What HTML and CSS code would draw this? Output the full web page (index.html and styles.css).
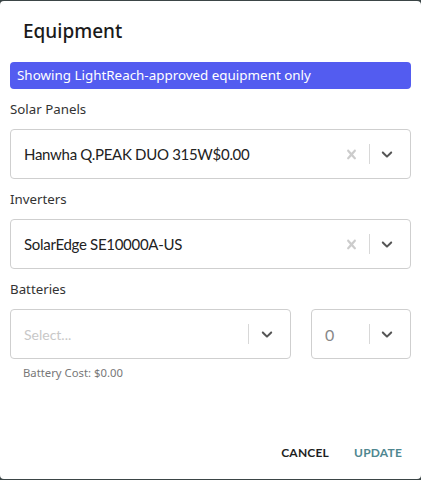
FILE: index.html
```html
<!DOCTYPE html>
<html>
<head>
<meta charset="utf-8">
<link rel="stylesheet" href="styles.css">
</head>
<body>
<div class="dialog">
  <h2 class="title">Equipment</h2>
  <div class="banner">Showing LightReach-approved equipment only</div>
  <div class="field">
    <div class="label">Solar Panels</div>
    <div class="select">
      <div class="value">Hanwha Q.PEAK DUO 315W$0.00</div>
      <div class="indicators">
        <svg class="clear" width="20" height="20" viewBox="0 0 20 20"><path d="M14.348 14.849c-0.469 0.469-1.229 0.469-1.697 0l-2.651-3.030-2.651 3.029c-0.469 0.469-1.229 0.469-1.697 0-0.469-0.469-0.469-1.229 0-1.697l2.758-3.15-2.759-3.152c-0.469-0.469-0.469-1.228 0-1.697s1.228-0.469 1.697 0l2.652 3.031 2.651-3.031c0.469-0.469 1.228-0.469 1.697 0s0.469 1.229 0 1.697l-2.758 3.152 2.758 3.15c0.469 0.469 0.469 1.229 0 1.698z"/></svg>
        <span class="sep"></span>
        <svg class="chev" width="20" height="20" viewBox="0 0 20 20"><path d="M4.516 7.548c0.436-0.446 1.043-0.481 1.576 0l3.908 3.747 3.908-3.747c0.533-0.481 1.141-0.446 1.574 0 0.436 0.445 0.408 1.197 0 1.615-0.406 0.418-4.695 4.502-4.695 4.502-0.217 0.223-0.502 0.335-0.787 0.335s-0.57-0.112-0.789-0.335c0 0-4.287-4.084-4.695-4.502s-0.436-1.170 0-1.615z"/></svg>
      </div>
    </div>
  </div>
  <div class="field">
    <div class="label">Inverters</div>
    <div class="select">
      <div class="value">SolarEdge SE10000A-US</div>
      <div class="indicators">
        <svg class="clear" width="20" height="20" viewBox="0 0 20 20"><path d="M14.348 14.849c-0.469 0.469-1.229 0.469-1.697 0l-2.651-3.030-2.651 3.029c-0.469 0.469-1.229 0.469-1.697 0-0.469-0.469-0.469-1.229 0-1.697l2.758-3.15-2.759-3.152c-0.469-0.469-0.469-1.228 0-1.697s1.228-0.469 1.697 0l2.652 3.031 2.651-3.031c0.469-0.469 1.228-0.469 1.697 0s0.469 1.229 0 1.697l-2.758 3.152 2.758 3.15c0.469 0.469 0.469 1.229 0 1.698z"/></svg>
        <span class="sep"></span>
        <svg class="chev" width="20" height="20" viewBox="0 0 20 20"><path d="M4.516 7.548c0.436-0.446 1.043-0.481 1.576 0l3.908 3.747 3.908-3.747c0.533-0.481 1.141-0.446 1.574 0 0.436 0.445 0.408 1.197 0 1.615-0.406 0.418-4.695 4.502-4.695 4.502-0.217 0.223-0.502 0.335-0.787 0.335s-0.57-0.112-0.789-0.335c0 0-4.287-4.084-4.695-4.502s-0.436-1.170 0-1.615z"/></svg>
      </div>
    </div>
  </div>
  <div class="field">
    <div class="label">Batteries</div>
    <div class="battery-row">
      <div class="select battery">
        <div class="value placeholder">Select...</div>
        <div class="indicators">
          <span class="sep"></span>
          <svg class="chev" width="20" height="20" viewBox="0 0 20 20"><path d="M4.516 7.548c0.436-0.446 1.043-0.481 1.576 0l3.908 3.747 3.908-3.747c0.533-0.481 1.141-0.446 1.574 0 0.436 0.445 0.408 1.197 0 1.615-0.406 0.418-4.695 4.502-4.695 4.502-0.217 0.223-0.502 0.335-0.787 0.335s-0.57-0.112-0.789-0.335c0 0-4.287-4.084-4.695-4.502s-0.436-1.170 0-1.615z"/></svg>
        </div>
      </div>
      <div class="select count">
        <div class="value muted">0</div>
        <div class="indicators">
          <span class="sep"></span>
          <svg class="chev" width="20" height="20" viewBox="0 0 20 20"><path d="M4.516 7.548c0.436-0.446 1.043-0.481 1.576 0l3.908 3.747 3.908-3.747c0.533-0.481 1.141-0.446 1.574 0 0.436 0.445 0.408 1.197 0 1.615-0.406 0.418-4.695 4.502-4.695 4.502-0.217 0.223-0.502 0.335-0.787 0.335s-0.57-0.112-0.789-0.335c0 0-4.287-4.084-4.695-4.502s-0.436-1.170 0-1.615z"/></svg>
        </div>
      </div>
    </div>
    <div class="cost">Battery Cost: $0.00</div>
  </div>
  <div class="actions">
    <button class="btn cancel">CANCEL</button>
    <button class="btn update">UPDATE</button>
  </div>
</div>
</body>
</html>
```
FILE: styles.css
```css
html, body {
  margin: 0;
  padding: 0;
  background: #3b4546;
  height: 480px;
  overflow: hidden;
}
body {
  padding-top: 1px;
  box-sizing: border-box;
  font-family: "Noto Sans", "Open Sans", sans-serif;
}
.dialog {
  background: #fff;
  border-radius: 4px;
  height: 478px;
  padding: 0 10px;
  box-sizing: border-box;
  display: flex;
  flex-direction: column;
}
.title {
  margin: 0;
  padding: 15px 0 0 13px;
  font-size: 19px;
  font-weight: 500;
  color: #1a1a1a;
  line-height: 30px;
  height: 46px;
}
.banner {
  background: #535cf0;
  color: #fff;
  border-radius: 4px;
  font-size: 13.4px;
  line-height: 27px;
  height: 27px;
  padding: 0 7px;
}
.field {
  display: flex;
  flex-direction: column;
}
.label {
  font-size: 13.3px;
  color: #333;
  line-height: 20px;
  margin-top: 10px;
  height: 20px;
}
.select {
  margin-top: 10px;
  height: 50px;
  border: 1px solid #cfcfcf;
  border-radius: 4px;
  box-sizing: border-box;
  display: flex;
  align-items: center;
  padding-left: 13px;
}
.value {
  flex: 1;
  font-family: Lato, "Liberation Sans", sans-serif;
  font-size: 15px;
  letter-spacing: -0.3px;
  color: #222;
  white-space: nowrap;
}
.placeholder {
  color: #c8c8c8;
  font-size: 14px;
  letter-spacing: 0;
}
.muted {
  color: #888;
}
.indicators {
  display: flex;
  align-items: center;
  padding-right: 14px;
}
.clear {
  fill: #cccccc;
  width: 19px;
  height: 19px;
  margin-right: 8px;
}
.sep {
  width: 1px;
  height: 20px;
  background: #d8d8d8;
  margin-right: 8px;
}
.chev {
  fill: #555;
  width: 18px;
  height: 18px;
}
.battery-row {
  display: flex;
  gap: 20px;
}
.battery {
  flex: 1;
}
.count {
  width: 100px;
}
.battery .indicators {
  padding-right: 14px;
}
.battery .sep {
  margin-right: 9px;
}
.count .indicators {
  padding-right: 14px;
}
.count .sep {
  margin-right: 8px;
}
.count .value {
  font-size: 16px;
}
.cost {
  font-size: 11.3px;
  color: #777;
  padding-left: 13px;
  margin-top: 6px;
  line-height: 16px;
}
.actions {
  margin-top: auto;
  display: flex;
  justify-content: flex-end;
  gap: 5px;
  padding-bottom: 12px;
}
.btn {
  background: none;
  border: none;
  font-family: Lato, "Liberation Sans", sans-serif;
  font-weight: 700;
  font-size: 12px;
  letter-spacing: 0.2px;
  padding: 6px 10px;
  line-height: 16px;
}
.cancel {
  color: #1e1e1e;
}
.update {
  color: #4f8790;
  padding-right: 9px;
}
```
